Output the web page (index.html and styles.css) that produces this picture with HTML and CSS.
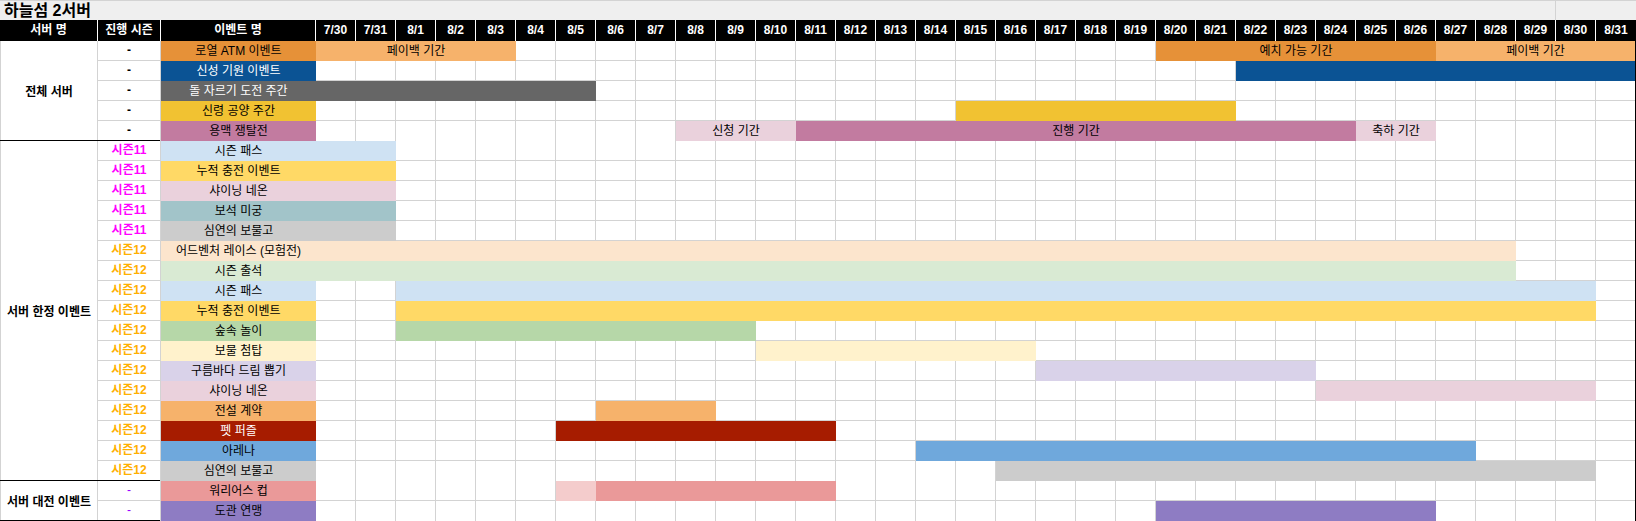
FILE: index.html
```html
<!DOCTYPE html>
<html lang="ko">
<head>
<meta charset="utf-8">
<title>하늘섬 2서버</title>
<link rel="stylesheet" href="styles.css">
</head>
<body>
<div class="sheet">
  <div class="title">
    <div class="title-cell">하늘섬 2서버</div>
    <div class="title-cell"></div>
  </div>
  <div class="head">
    <div>서버 명</div><div>진행 시즌</div><div>이벤트 명</div>
    <div>7/30</div><div>7/31</div><div>8/1</div><div>8/2</div><div>8/3</div><div>8/4</div><div>8/5</div><div>8/6</div><div>8/7</div><div>8/8</div><div>8/9</div><div>8/10</div><div>8/11</div><div>8/12</div><div>8/13</div><div>8/14</div><div>8/15</div><div>8/16</div><div>8/17</div><div>8/18</div><div>8/19</div><div>8/20</div><div>8/21</div><div>8/22</div><div>8/23</div><div>8/24</div><div>8/25</div><div>8/26</div><div>8/27</div><div>8/28</div><div>8/29</div><div>8/30</div><div>8/31</div>
  </div>

  <section class="section">
    <div class="label">전체 서버</div>
    <div class="rows">
      <div class="row">
        <div class="season">-</div>
        <div class="name c-orange">로열 ATM 이벤트</div>
        <div class="days">
          <div class="bar c-lorange" style="grid-column:1/6">페이백 기간</div>
          <div class="bar c-orange" style="grid-column:22/29">예치 가능 기간</div>
          <div class="bar c-lorange" style="grid-column:29/34">페이백 기간</div>
        </div>
      </div>
      <div class="row">
        <div class="season">-</div>
        <div class="name c-blue">신성 기원 이벤트</div>
        <div class="days">
          <div class="bar c-blue" style="grid-column:24/34"></div>
        </div>
      </div>
      <div class="row">
        <div class="season">-</div>
        <div class="name c-dgray">돌 자르기 도전 주간</div>
        <div class="days">
          <div class="bar c-dgray" style="grid-column:1/8"></div>
        </div>
      </div>
      <div class="row">
        <div class="season">-</div>
        <div class="name c-gold">신령 공양 주간</div>
        <div class="days">
          <div class="bar c-gold" style="grid-column:17/24"></div>
        </div>
      </div>
      <div class="row">
        <div class="season">-</div>
        <div class="name c-mauve">용맥 쟁탈전</div>
        <div class="days">
          <div class="bar c-pink" style="grid-column:10/13">신청 기간</div>
          <div class="bar c-mauve" style="grid-column:13/27">진행 기간</div>
          <div class="bar c-pink" style="grid-column:27/29">축하 기간</div>
        </div>
      </div>
    </div>
  </section>

  <section class="section">
    <div class="label">서버 한정 이벤트</div>
    <div class="rows">
      <div class="row">
        <div class="season s11">시즌11</div>
        <div class="name c-lblue">시즌 패스</div>
        <div class="days"><div class="bar c-lblue" style="grid-column:1/3"></div></div>
      </div>
      <div class="row">
        <div class="season s11">시즌11</div>
        <div class="name c-lyellow">누적 충전 이벤트</div>
        <div class="days"><div class="bar c-lyellow" style="grid-column:1/3"></div></div>
      </div>
      <div class="row">
        <div class="season s11">시즌11</div>
        <div class="name c-pink">샤이닝 네온</div>
        <div class="days"><div class="bar c-pink" style="grid-column:1/3"></div></div>
      </div>
      <div class="row">
        <div class="season s11">시즌11</div>
        <div class="name c-teal">보석 미궁</div>
        <div class="days"><div class="bar c-teal" style="grid-column:1/3"></div></div>
      </div>
      <div class="row">
        <div class="season s11">시즌11</div>
        <div class="name c-gray">심연의 보물고</div>
        <div class="days"><div class="bar c-gray" style="grid-column:1/3"></div></div>
      </div>
      <div class="row">
        <div class="season s12">시즌12</div>
        <div class="name c-peach">어드벤처 레이스 (모험전)</div>
        <div class="days"><div class="bar c-peach" style="grid-column:1/31"></div></div>
      </div>
      <div class="row">
        <div class="season s12">시즌12</div>
        <div class="name c-lgreen">시즌 출석</div>
        <div class="days"><div class="bar c-lgreen" style="grid-column:1/31"></div></div>
      </div>
      <div class="row">
        <div class="season s12">시즌12</div>
        <div class="name c-lblue">시즌 패스</div>
        <div class="days"><div class="bar c-lblue" style="grid-column:3/33"></div></div>
      </div>
      <div class="row">
        <div class="season s12">시즌12</div>
        <div class="name c-lyellow">누적 충전 이벤트</div>
        <div class="days"><div class="bar c-lyellow" style="grid-column:3/33"></div></div>
      </div>
      <div class="row">
        <div class="season s12">시즌12</div>
        <div class="name c-green">숲속 놀이</div>
        <div class="days"><div class="bar c-green" style="grid-column:3/12"></div></div>
      </div>
      <div class="row">
        <div class="season s12">시즌12</div>
        <div class="name c-cream">보물 첨탑</div>
        <div class="days"><div class="bar c-cream" style="grid-column:12/19"></div></div>
      </div>
      <div class="row">
        <div class="season s12">시즌12</div>
        <div class="name c-lav">구름바다 드림 뽑기</div>
        <div class="days"><div class="bar c-lav" style="grid-column:19/26"></div></div>
      </div>
      <div class="row">
        <div class="season s12">시즌12</div>
        <div class="name c-pink">샤이닝 네온</div>
        <div class="days"><div class="bar c-pink" style="grid-column:26/33"></div></div>
      </div>
      <div class="row">
        <div class="season s12">시즌12</div>
        <div class="name c-lorange">전설 계약</div>
        <div class="days"><div class="bar c-lorange" style="grid-column:8/11"></div></div>
      </div>
      <div class="row">
        <div class="season s12">시즌12</div>
        <div class="name c-red">펫 퍼즐</div>
        <div class="days"><div class="bar c-red" style="grid-column:7/14"></div></div>
      </div>
      <div class="row">
        <div class="season s12">시즌12</div>
        <div class="name c-sky">아레나</div>
        <div class="days"><div class="bar c-sky" style="grid-column:16/30"></div></div>
      </div>
      <div class="row">
        <div class="season s12">시즌12</div>
        <div class="name c-gray">심연의 보물고</div>
        <div class="days"><div class="bar c-gray" style="grid-column:18/33"></div></div>
      </div>
    </div>
  </section>

  <section class="section">
    <div class="label">서버 대전 이벤트</div>
    <div class="rows">
      <div class="row">
        <div class="season vs">-</div>
        <div class="name c-salmon">워리어스 컵</div>
        <div class="days">
          <div class="bar c-palered" style="grid-column:7/8"></div>
          <div class="bar c-salmon" style="grid-column:8/14"></div>
        </div>
      </div>
      <div class="row">
        <div class="season vs">-</div>
        <div class="name c-purple">도관 연맹</div>
        <div class="days"><div class="bar c-purple" style="grid-column:22/29"></div></div>
      </div>
    </div>
  </section>
</div>
</body>
</html>
```

FILE: styles.css
```css
* { box-sizing: border-box; }

body {
  margin: 0;
  background: #fff;
  color: #000;
  font-family: "Liberation Sans", "Noto Sans CJK KR", sans-serif;
  font-size: 12px;
}

.sheet { width: 1636px; }

.title {
  display: grid;
  grid-template-columns: 1555px 81px;
  height: 20px;
  background: #efefef;
  border-top: 1px solid #d3d3d3;
}
.title-cell {
  font-size: 16px;
  font-weight: bold;
  line-height: 19px;
  padding-left: 4px;
  white-space: nowrap;
}
.title-cell + .title-cell { border-left: 1px solid #d3d3d3; }

.head {
  display: grid;
  grid-template-columns: 98px 63px 155px repeat(33, 40px);
  height: 21px;
  background: #000;
  color: #fff;
  font-weight: bold;
  line-height: 20px;
}
.head > div {
  text-align: center;
  border-right: 1px solid #fff;
  white-space: nowrap;
}
.head > div:last-child { border-right: none; }

.section {
  display: grid;
  grid-template-columns: 98px 1538px;
  border-bottom: 1px solid #000;
}
.label {
  display: flex;
  align-items: center;
  justify-content: center;
  border-left: 1px solid #d3d3d3;
  border-right: 1px solid #d3d3d3;
  font-weight: bold;
  white-space: nowrap;
}
.rows { display: flex; flex-direction: column; }

.row {
  display: grid;
  grid-template-columns: 63px 155px 1320px;
  height: 20px;
}
.row:last-child { height: 19px; }

.season {
  text-align: center;
  font-weight: bold;
  line-height: 19px;
  border-right: 1px solid #d3d3d3;
  border-bottom: 1px solid #d3d3d3;
}
.row:last-child .season { border-bottom: none; }
.season.s11 { color: #ff00ff; }
.season.s12 { color: #ffb000; }
.season.vs { color: #9900ff; font-weight: normal; }

.name {
  text-align: center;
  line-height: 20px;
  white-space: nowrap;
}

.days {
  display: grid;
  grid-template-columns: repeat(32, 40px) 39px;
  grid-template-rows: 100%;
  border-right: 1px solid #000;
  background:
    linear-gradient(to top, #d3d3d3 1px, transparent 1px),
    repeating-linear-gradient(to right, transparent 0 39px, #d3d3d3 39px 40px),
    #fff;
}
.row:last-child .days {
  background:
    repeating-linear-gradient(to right, transparent 0 39px, #d3d3d3 39px 40px),
    #fff;
}

.bar {
  grid-row: 1;
  text-align: center;
  line-height: 20px;
  white-space: nowrap;
  overflow: hidden;
}

.c-orange  { background: #e69138; }
.c-lorange { background: #f6b26b; }
.c-blue    { background: #0b5394; color: #fff; }
.c-dgray   { background: #666666; color: #fff; }
.c-gold    { background: #f1c232; }
.c-mauve   { background: #c27ba0; }
.c-pink    { background: #ead1dc; }
.c-lblue   { background: #cfe2f3; }
.c-lyellow { background: #ffd966; }
.c-teal    { background: #a2c4c9; }
.c-gray    { background: #cccccc; }
.c-peach   { background: #fce5cd; }
.c-lgreen  { background: #d9ead3; }
.c-green   { background: #b6d7a8; }
.c-cream   { background: #fff2cc; }
.c-lav     { background: #d9d2e9; }
.c-red     { background: #a61c00; color: #fff; }
.c-sky     { background: #6fa8dc; }
.c-salmon  { background: #ea9999; }
.c-palered { background: #f4cccc; }
.c-purple  { background: #8e7cc3; }
```
